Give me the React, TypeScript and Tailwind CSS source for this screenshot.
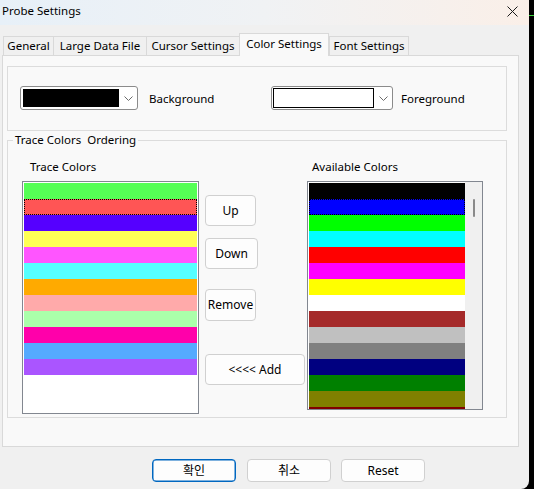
import React from "react";

const traceColors = [
  "bg-[#55ff55]",
  "bg-[#ff5555]",
  "bg-[#5500ff]",
  "bg-[#ffff55]",
  "bg-[#ff55ff]",
  "bg-[#55ffff]",
  "bg-[#ffaa00]",
  "bg-[#ffaaaa]",
  "bg-[#aaffaa]",
  "bg-[#ff00aa]",
  "bg-[#55aaff]",
  "bg-[#aa55ff]",
];

const availColors = [
  "bg-[#000000]",
  "bg-[#0000ff]",
  "bg-[#00ff00]",
  "bg-[#00ffff]",
  "bg-[#ff0000]",
  "bg-[#ff00ff]",
  "bg-[#ffff00]",
  "bg-[#ffffff]",
  "bg-[#a52a2a]",
  "bg-[#c0c0c0]",
  "bg-[#808080]",
  "bg-[#000080]",
  "bg-[#008000]",
  "bg-[#808000]",
  "bg-[#800000]",
];

function Chevron() {
  return (
    <svg width="9" height="5" viewBox="0 0 9 5" className="shrink-0">
      <path d="M0.5 0.5 L4.5 4.5 L8.5 0.5" fill="none" stroke="#6b6b6b" strokeWidth="1" />
    </svg>
  );
}

function Tab({ w, selected, last, children }: { w: string; selected?: boolean; last?: boolean; children: React.ReactNode }) {
  if (selected) {
    return (
      <div className={`${w} h-[23px] border border-b-0 border-[#d9d9d9] bg-[#f9f9f9] flex items-center justify-center pb-[2px]`}>
        {children}
      </div>
    );
  }
  return (
    <div
      className={`${w} h-[20px] border-t border-l border-b border-[#d9d9d9] ${last ? "border-r" : ""} bg-[#f0f0f0] flex items-center justify-center`}
    >
      {children}
    </div>
  );
}

function Btn({ cls, children }: { cls: string; children: React.ReactNode }) {
  return (
    <div className={`${cls} border border-[#d0d0d0] rounded-[4px] bg-[#fdfdfd] flex items-center justify-center text-[12px] text-black`}>
      {children}
    </div>
  );
}

export default function App() {
  return (
    <div className="w-[534px] h-[489px] bg-black flex font-['Noto_Sans','Noto_Sans_CJK_KR',sans-serif] text-[11.5px] text-black leading-[16px]">
      <div className="w-[529px] h-[489px] bg-[#f0f0f0] rounded-br-[8px] flex flex-col">
        {/* title bar */}
        <div className="h-[25px] bg-gradient-to-r from-[#e7f0f8] via-[#f0f2f4] to-[#faefe8] flex items-center justify-between pl-[2px] pb-[4px]">
          <span className="text-[11.5px]">Probe Settings</span>
          <svg width="11" height="11" viewBox="0 0 11 11" className="mr-[11px] mt-[1px]">
            <path d="M0.5 0.5 L10.5 10.5 M10.5 0.5 L0.5 10.5" stroke="#1a1a1a" strokeWidth="1" />
          </svg>
        </div>

        {/* tabs */}
        <div className="flex items-end h-[23px] mt-[8px] pl-[3px] relative z-10 -mb-px">
          <Tab w="w-[50px]">General</Tab>
          <Tab w="w-[93px]">Large Data File</Tab>
          <Tab w="w-[93px]">Cursor Settings</Tab>
          <Tab w="w-[90px]" selected>
            Color Settings
          </Tab>
          <Tab w="w-[80px]" last>
            Font Settings
          </Tab>
        </div>

        {/* panel */}
        <div className="ml-[2px] w-[517px] h-[392px] border border-[#d9d9d9] bg-[#f9f9f9] flex flex-col">
          <div className="ml-[4px] mt-[10px] w-[500px] h-[65px] border border-[#dcdcdc] flex items-start pt-[19px] pl-[12px]">
            <div className="w-[251px] flex items-center">
              <div className="w-[118px] h-[24px] border border-[#8b8b8b] rounded-[3px] bg-white flex items-center pl-[2px]">
                <div className="w-[96px] h-[18px] bg-black" />
                <div className="flex-1 flex justify-center">
                  <Chevron />
                </div>
              </div>
              <span className="ml-[11px] pt-[1px]">Background</span>
            </div>
            <div className="flex items-center">
              <div className="w-[122px] h-[24px] border border-[#8b8b8b] rounded-[3px] bg-white flex items-center pl-[1px]">
                <div className="w-[101px] h-[20px] bg-white border border-black" />
                <div className="flex-1 flex justify-center">
                  <Chevron />
                </div>
              </div>
              <span className="ml-[8px] pt-[1px]">Foreground</span>
            </div>
          </div>

          <fieldset className="ml-[4px] mt-[1px] w-[500px] h-[286px] border border-[#dcdcdc] min-w-0">
            <legend className="ml-[5px] px-[2px] leading-[16px]">Trace Colors&nbsp; Ordering</legend>
            <div className="flex pt-[11px]">
              {/* left column */}
              <div className="ml-[14px] w-[177px] flex flex-col">
                <span className="pl-[8px] leading-[16px]">Trace Colors</span>
                <div className="mt-[6px] h-[233px] border border-[#828790] bg-white p-px flex flex-col">
                  {traceColors.map((c, i) => (
                    <div
                      key={i}
                      className={`h-[16px] shrink-0 ${c} ${i === 1 ? "border border-dotted border-black" : ""}`}
                    />
                  ))}
                </div>
              </div>

              {/* buttons */}
              <div className="ml-[6px] w-[102px] flex flex-col items-start pt-[36px]">
                <Btn cls="w-[51px] h-[31px]">Up</Btn>
                <Btn cls="mt-[12px] w-[53px] h-[31px]">Down</Btn>
                <Btn cls="mt-[20px] w-[51px] h-[32px]">Remove</Btn>
                <Btn cls="mt-[33px] w-[100px] h-[31px]">&lt;&lt;&lt;&lt; Add</Btn>
              </div>

              {/* right column */}
              <div className="w-[176px] flex flex-col">
                <span className="pl-[5px] leading-[16px]">Available Colors</span>
                <div className="mt-[6px] h-[229px] border border-[#828790] bg-white flex overflow-hidden">
                  <div className="w-[157px] pl-px pt-px flex flex-col overflow-hidden">
                    {availColors.map((c, i) => (
                      <div
                        key={i}
                        className={`h-[16px] w-[156px] shrink-0 ${c} ${i === 1 ? "border border-dotted border-black" : ""}`}
                      />
                    ))}
                  </div>
                  <div className="flex-1 bg-[#f0f0f0]">
                    <div className="ml-[8px] mt-[17px] w-[2px] h-[18px] rounded-full bg-[#8a8a8a]" />
                  </div>
                </div>
              </div>
            </div>
          </fieldset>
        </div>

        {/* bottom buttons */}
        <div className="flex mt-[12px] pl-[152px]">
          <div className="w-[84px] h-[23px] border border-[#0067c0] shadow-[inset_0_0_0_0.5px_#0067c0] rounded-[4px] bg-[#fdfdfd] flex items-center justify-center text-[12px]">
            확인
          </div>
          <Btn cls="ml-[11px] w-[84px] h-[23px]">취소</Btn>
          <Btn cls="ml-[10px] w-[84px] h-[23px]">Reset</Btn>
        </div>
      </div>
      <div className="flex-1 flex flex-col">
        <div className="mt-[15px] h-[1px] bg-[#3ad43a]" />
      </div>
    </div>
  );
}
